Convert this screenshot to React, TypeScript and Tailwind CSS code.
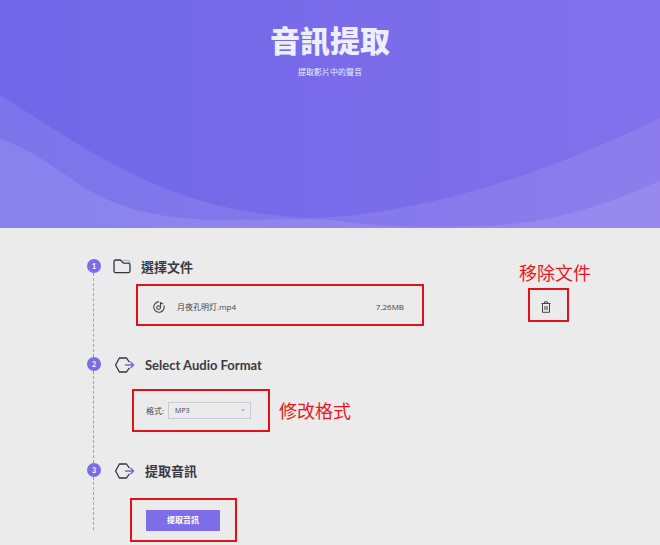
import type { ReactNode } from 'react';

const RED = 'border-2 border-[#df1218]';

function FolderIcon() {
  return (
    <svg className="w-[18px] h-4 shrink-0" viewBox="0 0 18 16" fill="none" strokeWidth="1.3" strokeLinejoin="round" aria-hidden="true">
      <path d="M9.5 1.4 H14.8 Q17 1.4 17 3.8" stroke="#a9a4cf" strokeWidth="1" />
      <path d="M1 3 Q1 1 3 1 H7.4 L10.6 4.2 H15.2 Q17 4.2 17 6 V11.9 Q17 13.7 15.2 13.7 H3 Q1 13.7 1 11.7 Z" stroke="#33333f" />
    </svg>
  );
}

function ExportIcon() {
  return (
    <svg className="w-[22px] h-4 shrink-0" viewBox="0 0 22 16" fill="none" strokeWidth="1.3" strokeLinecap="round" strokeLinejoin="round" aria-hidden="true">
      <path d="M16 4.6 L13.5 1 H6.4 L2.6 8 L6.4 15 H13.5 L16 11.4" stroke="#33333f" />
      <path d="M12.5 8 H20.5 M17.8 5.2 L20.6 8 L17.8 10.8" stroke="#7467cf" />
    </svg>
  );
}

function DiscIcon() {
  return (
    <svg className="size-3 shrink-0" viewBox="0 0 12 12" fill="none" stroke="#44444c" strokeWidth="1.1" strokeLinecap="round" aria-hidden="true">
      <path d="M5.6 0.9 A5.2 5.2 0 1 0 11 4.8" />
      <circle cx="5.6" cy="6.6" r="1.9" />
      <path d="M7.5 6.4 V1.2 Q7.8 2.6 9.8 2.8" />
    </svg>
  );
}

function TrashIcon() {
  return (
    <svg className="w-2.5 h-3" viewBox="0 0 10 12" fill="none" stroke="#44444c" aria-hidden="true">
      <path d="M0.5 2.5 H9.5 M3.5 2.5 V0.8 H6.5 V2.5 M1.5 2.5 V11.3 H8.5 V2.5 M4 5 V9 M6 5 V9" />
    </svg>
  );
}

function Step({ number, className, children }: { number: number; className: string; children: ReactNode }) {
  return (
    <li className={`flex gap-3 ${className}`}>
      <div className="flex flex-col w-3.5 shrink-0">
        <span className="flex items-center justify-center size-3.5 rounded-full bg-[#7c6ce6] text-white text-[7px] font-bold">
          {number}
        </span>
        <span className="flex-1 ml-1.5 border-l border-dashed border-[#a0a0a8]" />
      </div>
      <div className="flex-1">{children}</div>
    </li>
  );
}

function StepTitle({ icon, children }: { icon: ReactNode; children: ReactNode }) {
  return (
    <h2 className="flex items-center gap-2.5 h-4 text-[13px] leading-4 font-bold text-[#3a3a42] whitespace-nowrap">
      {icon}
      {children}
    </h2>
  );
}

function Note({ children }: { children: ReactNode }) {
  return <span className="text-[18px] leading-5 text-[#e8191c] whitespace-nowrap">{children}</span>;
}

export default function App() {
  return (
    <div className="min-h-screen bg-[#ebebeb] text-[#44444c] font-[Lato,'Noto_Sans_CJK_TC',sans-serif]">
      <header className="relative h-[228px] overflow-hidden bg-linear-to-r from-[#6f67e8] via-[#796be9] to-[#8370ec] text-center text-[#eeeefc]">
        <svg className="absolute inset-0 w-full h-full" viewBox="0 0 660 228" preserveAspectRatio="none" aria-hidden="true">
          <path d="M0 95 C100 158 175 214 315 218 C440 213 570 162 660 118 V228 H0 Z" fill="#fff" fillOpacity="0.09" />
          <path d="M0 139 C75 164 80 218 220 220 C270 220 310 217 340 221 C380 228 440 227 480 226 C550 224 600 207 660 181 V228 H0 Z" fill="#fff" fillOpacity="0.1" />
        </svg>
        <div className="relative pt-5">
          <h1 className="text-[30px] leading-10 font-black">音訊提取</h1>
          <p className="mt-1 text-[8px] leading-4">提取影片中的聲音</p>
        </div>
      </header>

      <main className="pt-[31px] pl-[87px] pr-[67px] pb-1">
        <ol>
          <Step number={1} className="min-h-[98px]">
            <div className="flex gap-[95px]">
              <div className="flex-1">
                <StepTitle icon={<FolderIcon />}>選擇文件</StepTitle>
                <div className={`mt-[9px] ml-[23px] flex items-center h-[42px] pt-1 pl-[15px] pr-[18px] font-['Open_Sans','Noto_Sans_CJK_TC',sans-serif] text-[8px] ${RED}`}>
                  <DiscIcon />
                  <span className="ml-3">月夜孔明灯.mp4</span>
                  <span className="ml-auto">7.26MB</span>
                </div>
              </div>
              <div className="flex flex-col items-start w-[74px] pt-1">
                <Note>移除文件</Note>
                <button type="button" aria-label="移除文件" className={`mt-[5px] ml-[9px] flex items-center justify-center w-[41px] h-[34px] pt-1 pr-1.5 ${RED}`}>
                  <TrashIcon />
                </button>
              </div>
            </div>
          </Step>

          <Step number={2} className="min-h-[106px]">
            <StepTitle icon={<ExportIcon />}>Select Audio Format</StepTitle>
            <div className="mt-4 ml-[19px] flex items-center gap-[9px]">
              <div className={`flex items-center gap-1 w-[138px] h-[43px] pl-3 font-['Open_Sans','Noto_Sans_CJK_TC',sans-serif] ${RED}`}>
                <label htmlFor="format" className="text-[8px] whitespace-nowrap">格式:</label>
                <div className="relative">
                  <select id="format" defaultValue="MP3" className="block appearance-none w-[83px] h-[17px] pl-1.5 border border-[#c9cad6] text-[7px] leading-3">
                    <option>MP3</option>
                    <option>WAV</option>
                    <option>AAC</option>
                  </select>
                  <svg className="absolute right-1.5 top-1.5 size-1 pointer-events-none" viewBox="0 0 4 4" fill="none" stroke="#a0a0aa" aria-hidden="true">
                    <path d="M0.5 1 L2 3 L3.5 1" />
                  </svg>
                </div>
              </div>
              <Note>修改格式</Note>
            </div>
          </Step>

          <Step number={3} className="h-[67px]">
            <StepTitle icon={<ExportIcon />}>提取音訊</StepTitle>
            <div className={`mt-[19px] ml-[17px] flex items-center w-[107px] h-11 pl-3.5 ${RED}`}>
              <button type="button" className="w-[74px] h-[21px] bg-[#7d6ee8] text-white text-[8px] font-bold">
                提取音訊
              </button>
            </div>
          </Step>
        </ol>
      </main>
    </div>
  );
}
